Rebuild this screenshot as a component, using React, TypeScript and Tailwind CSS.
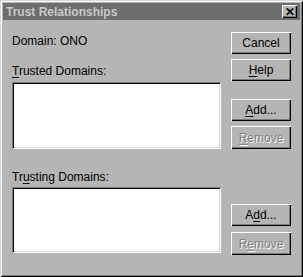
import React from 'react';

const raised =
  'shadow-[inset_1px_1px_0_#ffffff,inset_-1px_-1px_0_#000000,inset_-2px_-2px_0_#7a7a7a]';
const sunken =
  'shadow-[inset_1px_1px_0_#7a7a7a,inset_-1px_-1px_0_#ffffff,inset_2px_2px_0_#000000,inset_-2px_-2px_0_#d6d6d6]';

function Btn({
  pre = '',
  u = '',
  post = '',
  disabled = false,
  className = '',
}: {
  pre?: string;
  u?: string;
  post?: string;
  disabled?: boolean;
  className?: string;
}) {
  return (
    <button
      className={`w-[60px] h-[22px] bg-[#b5b5b5] ${raised} flex items-center justify-center text-[12px] leading-none ${
        disabled ? 'text-[#828282] [text-shadow:1px_1px_0_#ffffff]' : 'text-black'
      } ${className}`}
    >
      {pre}
      {u && <span className="underline underline-offset-2">{u}</span>}
      {post}
    </button>
  );
}

export default function App() {
  return (
    <div
      className="w-[303px] h-[277px] bg-[#b5b5b5] p-[3px] flex flex-col shadow-[inset_1px_1px_0_#d8d8d8,inset_-1px_-1px_0_#000000,inset_2px_2px_0_#ffffff,inset_-2px_-2px_0_#7a7a7a]"
      style={{ fontFamily: '"Liberation Sans", Arial, sans-serif' }}
    >
      <div className="h-[17px] bg-[#6e6e6e] flex items-center justify-between pl-[3px] pr-[3px]">
        <span className="text-[12px] font-bold text-[#c8c8c8] leading-none">Trust Relationships</span>
        <div
          className={`w-[15px] h-[13px] bg-[#b5b5b5] ${raised} flex items-center justify-center text-[12px] font-bold leading-none text-black`}
        >
          ✕
        </div>
      </div>

      <div className="flex flex-1">
        <div className="ml-[9px] w-[209px] flex flex-col text-[12px] leading-[13px] text-black">
          <div className="mt-[15px] flex">
            <span className="w-[48px]">Domain:</span>
            <span>ONO</span>
          </div>
          <div className="mt-[17px]">
            <span className="underline underline-offset-2">T</span>rusted Domains:
          </div>
          <div className={`mt-[4px] h-[67px] bg-white ${sunken}`} />
          <div className="mt-[22px]">
            Tr<span className="underline underline-offset-2">u</span>sting Domains:
          </div>
          <div className={`mt-[3px] h-[66px] bg-white ${sunken}`} />
        </div>

        <div className="ml-[10px] flex flex-col">
          <Btn pre="Cancel" className="mt-[12px]" />
          <Btn u="H" post="elp" className="mt-[5px]" />
          <Btn u="A" post="dd..." className="mt-[18px]" />
          <Btn u="R" post="emove" disabled className="mt-[5px] h-[23px]" />
          <Btn pre="A" u="d" post="d..." className="mt-[55px]" />
          <Btn pre="R" u="e" post="move" disabled className="mt-[6px] h-[23px]" />
        </div>
      </div>
    </div>
  );
}
